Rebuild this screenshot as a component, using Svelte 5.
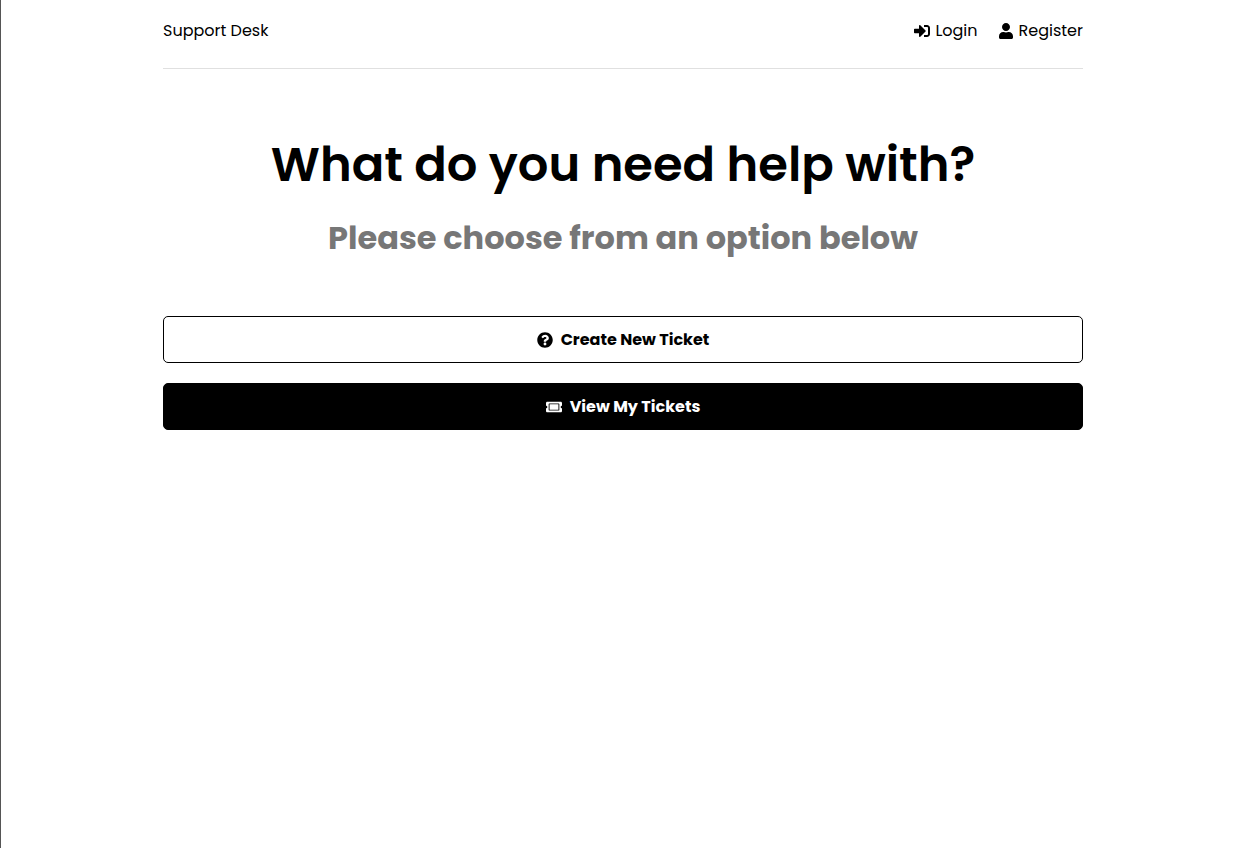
<script>
  const brand = 'Support Desk';
</script>

<div class="page">
  <div class="container">
    <header>
      <a class="logo" href="#home">{brand}</a>
      <ul>
        <li>
          <a href="#login">
            <svg viewBox="0 0 512 512" aria-hidden="true"><path d="M416 448h-84c-6.600 0-12-5.400-12-12v-40c0-6.600 5.400-12 12-12h84c17.700 0 32-14.300 32-32V160c0-17.700-14.300-32-32-32h-84c-6.600 0-12-5.400-12-12V76c0-6.600 5.400-12 12-12h84c53 0 96 43 96 96v192c0 53-43 96-96 96zm-47-209L201 71c-15-15-41-4.500-41 17v96H24c-13.300 0-24 10.700-24 24v96c0 13.300 10.700 24 24 24h136v96c0 21.500 26 32 41 17l168-168c9.300-9.400 9.300-24.600 0-34z" /></svg>
            Login
          </a>
        </li>
        <li>
          <a href="#register">
            <svg viewBox="0 0 448 512" aria-hidden="true"><path d="M224 256c70.700 0 128-57.300 128-128S294.700 0 224 0 96 57.300 96 128s57.300 128 128 128zm89.600 32h-16.700c-22.200 10.200-46.900 16-72.900 16s-50.600-5.800-72.900-16h-16.700C60.200 288 0 348.200 0 422.400V464c0 26.500 21.500 48 48 48h352c26.500 0 48-21.500 48-48v-41.600c0-74.200-60.200-134.400-134.400-134.400z" /></svg>
            Register
          </a>
        </li>
      </ul>
    </header>
    <main>
      <section>
        <h1>What do you need help with?</h1>
        <p>Please choose from an option below</p>
      </section>
      <a class="btn" href="#new-ticket">
        <svg viewBox="0 0 512 512" aria-hidden="true"><path d="M504 256c0 137-111 248-248 248S8 393 8 256C8 119.100 119 8 256 8s248 111.100 248 248zM262.700 90c-54.500 0-89.300 23-116.500 63.800-3.500 5.300-2.400 12.400 2.700 16.300l34.700 26.300c5.200 3.900 12.600 3 16.700-2.100 17.900-22.700 30.100-35.800 57.300-35.800 20.400 0 45.700 13.100 45.700 33 0 15-12.400 22.700-32.500 34C247.100 238.500 216 254.900 216 296v4c0 6.600 5.400 12 12 12h56c6.600 0 12-5.400 12-12v-1.300c0-28.500 83.200-29.600 83.200-106.700 0-58-60.200-102-116.500-102zM256 338c-25.400 0-46 20.600-46 46s20.600 46 46 46 46-20.600 46-46-20.600-46-46-46z" /></svg>
        Create New Ticket
      </a>
      <a class="btn filled" href="#tickets">
        <svg viewBox="0 0 576 512" aria-hidden="true"><path d="M128 160h320v192H128V160zm400 96c0 26.500 21.500 48 48 48v96c0 26.500-21.500 48-48 48H48c-26.500 0-48-21.500-48-48v-96c26.500 0 48-21.500 48-48s-21.500-48-48-48v-96c0-26.500 21.500-48 48-48h480c26.500 0 48 21.500 48 48v96c-26.500 0-48 21.500-48 48zm-48-104c0-13.300-10.700-24-24-24H120c-13.300 0-24 10.700-24 24v208c0 13.300 10.700 24 24 24h336c13.300 0 24-10.700 24-24V152z" /></svg>
        View My Tickets
      </a>
    </main>
  </div>
</div>

<style>
  :global(body) { margin: 0; background: #fff; }
  .page {
    min-height: 100vh;
    box-shadow: inset 1px 0 #555;
    font-family: Poppins, "Open Sans", sans-serif;
    font-size: 16px;
    color: #000;
  }
  .container { max-width: 920px; margin: 0 auto; padding: 0 20px; text-align: center; }
  header {
    display: flex;
    justify-content: space-between;
    align-items: center;
    padding: 20px 0 26px;
    margin-bottom: 60px;
    border-bottom: 1px solid #e0e0e0;
    line-height: 22px;
  }
  ul { display: flex; gap: 20px; margin: 0; padding: 0; list-style: none; }
  a { color: inherit; text-decoration: none; }
  li a { display: flex; align-items: center; gap: 5px; }
  svg { width: 16px; height: 16px; fill: currentColor; flex: none; }
  h1 { margin: 0 0 13px; font-size: 48px; font-weight: 600; line-height: 72px; }
  p { margin: 0; font-size: 32px; font-weight: 700; line-height: 48px; color: #777; }
  section { margin-bottom: 54px; }
  .btn {
    display: flex;
    justify-content: center;
    align-items: center;
    gap: 8px;
    margin-bottom: 20px;
    padding: 10px 20px;
    border: 1px solid #000;
    border-radius: 5px;
    font-weight: 700;
    line-height: 25px;
  }
  .filled { background: #000; color: #fff; }
</style>
